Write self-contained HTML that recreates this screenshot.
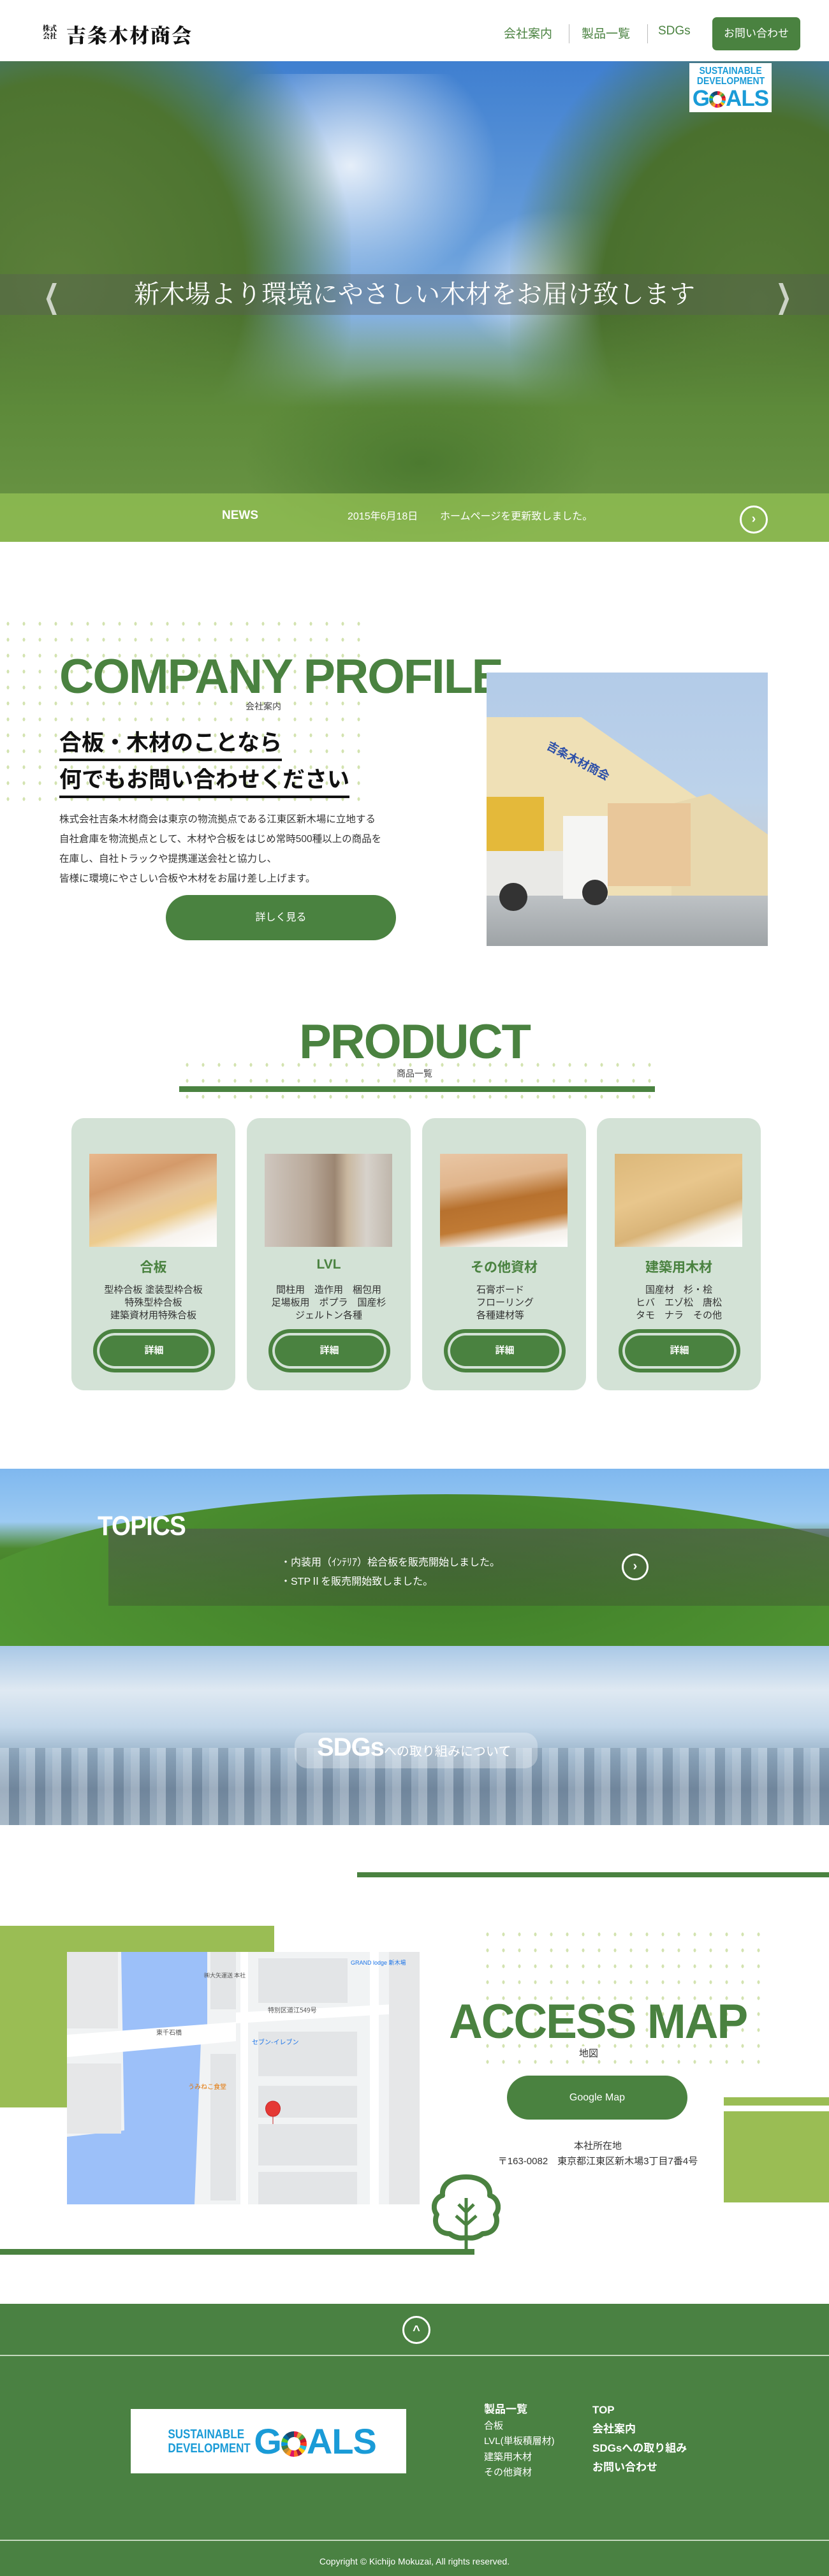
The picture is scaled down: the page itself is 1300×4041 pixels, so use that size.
<!DOCTYPE html>
<html lang="ja"><head><meta charset="utf-8">
<style>
*{margin:0;padding:0;box-sizing:border-box}
body{width:1300px;height:4041px;position:relative;background:#fff;font-family:"Liberation Sans","Noto Sans CJK JP",sans-serif;color:#222;overflow:hidden}
.abs{position:absolute}
.g{color:#4a8240}
.dots{background-image:radial-gradient(ellipse 2px 3px at center,#d3e3b0 95%,transparent 100%);background-size:25px 25px}
.sdg{background:#fff;color:#1a9bd7;font-weight:bold;font-family:"Liberation Sans",sans-serif;display:flex;flex-direction:column;justify-content:center;align-items:center;line-height:1}
.wheel{display:inline-block;border-radius:50%;background:conic-gradient(#e5243b 0 20deg,#dda63a 20deg 40deg,#4c9f38 40deg 60deg,#c5192d 60deg 80deg,#ff3a21 80deg 100deg,#26bde2 100deg 120deg,#fcc30b 120deg 140deg,#a21942 140deg 160deg,#fd6925 160deg 180deg,#dd1367 180deg 200deg,#fd9d24 200deg 220deg,#bf8b2e 220deg 240deg,#3f7e44 240deg 260deg,#0a97d9 260deg 280deg,#56c02b 280deg 300deg,#00689d 300deg 320deg,#19486a 320deg 360deg);position:relative;vertical-align:middle}
.wheel:after{content:"";position:absolute;inset:24%;background:#fff;border-radius:50%}
.card{position:absolute;top:1754px;width:257px;height:427px;background:#d3e2d6;border-radius:20px;text-align:center}
.card .img{position:absolute;left:28px;top:56px;width:200px;height:146px}
.card h3{position:absolute;top:218px;width:100%;font-size:21px;font-weight:bold;color:#4a8240}
.card p{position:absolute;top:260px;width:100%;font-size:15px;line-height:20px;color:#333}
.card .btn{position:absolute;left:34px;top:331px;width:191px;height:68px;border-radius:34px;background:#4a8240;border:6px solid #4a8240;box-shadow:inset 0 0 0 4px #d3e2d6;color:#fff;font-weight:bold;font-size:15px;line-height:56px}
.circ{position:absolute;border:3px solid #fff;border-radius:50%;}
</style></head><body>

<div class="abs" style="left:0;top:0;width:1300px;height:96px;background:#fff"></div>
<div class="abs" style="left:67px;top:38px;font-family:'Noto Serif CJK SC','Liberation Serif',serif;font-weight:900;font-size:11px;line-height:12px;width:28px;color:#111">株式<br>会社</div>
<div class="abs" style="left:104px;top:31px;font-family:'Noto Serif CJK SC','Liberation Serif',serif;font-weight:900;font-size:31px;letter-spacing:2px;color:#111">吉条木材商会</div>
<div class="abs g" style="left:790px;top:38px;font-size:19px">会社案内</div>
<div class="abs" style="left:892px;top:38px;width:1px;height:30px;background:#bbb"></div>
<div class="abs g" style="left:912px;top:38px;font-size:19px">製品一覧</div>
<div class="abs" style="left:1015px;top:38px;width:1px;height:30px;background:#bbb"></div>
<div class="abs g" style="left:1032px;top:38px;font-size:19px">SDGs</div>
<div class="abs" style="left:1117px;top:27px;width:138px;height:52px;background:#4a8240;border-radius:7px;color:#fff;font-size:17px;line-height:52px;text-align:center">お問い合わせ</div>

<div class="abs" style="left:0;top:96px;width:1300px;height:754px;overflow:hidden;background:linear-gradient(180deg,#3f7fd0 0%,#6aa0dc 40%,#9cc0e4 65%,#6e9a5a 100%)">
 <div class="abs" style="left:300px;top:20px;width:500px;height:360px;background:radial-gradient(ellipse at 50% 40%,rgba(255,255,255,.85),rgba(255,255,255,0) 65%)"></div>
 <div class="abs" style="left:700px;top:220px;width:360px;height:260px;background:radial-gradient(ellipse at center,rgba(255,255,255,.75),rgba(255,255,255,0) 65%)"></div>
 <div class="abs" style="left:-150px;top:-60px;width:700px;height:900px;background:radial-gradient(ellipse at 35% 45%,#5b7f3a 0%,#4d7430 45%,rgba(80,115,50,0) 72%)"></div>
 <div class="abs" style="left:800px;top:-80px;width:650px;height:920px;background:radial-gradient(ellipse at 60% 50%,#557a36 0%,#4a702e 45%,rgba(80,115,50,0) 72%)"></div>
 <div class="abs" style="left:0;top:400px;width:1300px;height:360px;background:linear-gradient(180deg,rgba(80,120,50,0),#5d8a3a 40%,#6c9646)"></div>
 <div class="abs" style="left:380px;top:480px;width:560px;height:300px;background:radial-gradient(ellipse at center,#4c7a30,rgba(76,122,48,0) 70%)"></div>
 <div class="abs" style="left:0;top:334px;width:1300px;height:64px;background:rgba(90,90,90,.35)"></div>
 <div class="abs" style="left:0;top:336px;width:1300px;text-align:center;color:#fff;font-family:'Liberation Serif','Noto Serif CJK SC',serif;font-size:40px;line-height:60px">新木場より環境にやさしい木材をお届け致します</div>
 <div class="abs" style="left:60px;top:340px;color:rgba(255,255,255,.7);font-size:50px;transform:scaleX(.6)">❮</div>
 <div class="abs" style="left:1208px;top:340px;color:rgba(255,255,255,.7);font-size:50px;transform:scaleX(.6)">❯</div>
 <div class="abs sdg" style="left:1081px;top:3px;width:129px;height:77px;font-size:15.5px">
  <div style="transform:scaleX(.9)">SUSTAINABLE</div><div style="transform:scaleX(.9);margin-top:1px">DEVELOPMENT</div>
  <div style="font-size:35px;letter-spacing:-1px;margin-top:1px">G<span class="wheel" style="width:26px;height:26px"></span>ALS</div></div>
 <div class="abs" style="left:0;top:678px;width:1300px;height:76px;background:rgba(150,195,85,.72)"></div>
 <div class="abs" style="left:348px;top:702px;color:#fff;font-weight:bold;font-size:19px">NEWS</div>
 <div class="abs" style="left:545px;top:700px;color:#fff;font-size:16px">2015年6月18日</div>
 <div class="abs" style="left:690px;top:700px;color:#fff;font-size:16px">ホームページを更新致しました。</div>
 <div class="circ" style="left:1160px;top:697px;width:44px;height:44px;color:#fff;text-align:center;line-height:36px;font-weight:bold;font-size:20px">›</div>
</div>

<div class="abs dots" style="left:0;top:966px;width:570px;height:300px"></div>
<div class="abs g" style="left:93px;top:1022px;font-size:76px;font-weight:bold;line-height:80px;letter-spacing:-2px;white-space:nowrap;transform:scaleX(.99);transform-origin:left">COMPANY PROFILE</div>
<div class="abs" style="left:385px;top:1098px;font-size:14px;color:#444">会社案内</div>
<div class="abs" style="left:93px;top:1142px;font-size:35px;font-weight:bold;line-height:48px;color:#111;border-bottom:4px solid #111">合板・木材のことなら</div>
<div class="abs" style="left:93px;top:1200px;font-size:35px;font-weight:bold;line-height:48px;color:#111;border-bottom:4px solid #111">何でもお問い合わせください</div>
<div class="abs" style="left:93px;top:1270px;font-size:15.5px;line-height:31px;color:#333;white-space:nowrap">株式会社吉条木材商会は東京の物流拠点である江東区新木場に立地する<br>自社倉庫を物流拠点として、木材や合板をはじめ常時500種以上の商品を<br>在庫し、自社トラックや提携運送会社と協力し、<br>皆様に環境にやさしい合板や木材をお届け差し上げます。</div>
<div class="abs" style="left:260px;top:1404px;width:361px;height:71px;border-radius:36px;background:#4a8240;color:#fff;text-align:center;line-height:71px;font-size:16px">詳しく見る</div>
<div class="abs" style="left:763px;top:1055px;width:441px;height:429px;overflow:hidden;background:linear-gradient(180deg,#b3cbe8 0%,#bcd2ea 45%,#c9cdd0 75%,#9ea3a6 100%)">
 <div class="abs" style="left:0;top:70px;width:330px;height:280px;background:#efe0b6;clip-path:polygon(0 0,45% 0,100% 45%,100% 100%,0 100%)"></div>
 <div class="abs" style="left:290px;top:190px;width:151px;height:160px;background:#e8d8ae;clip-path:polygon(0 10%,40% 0,100% 40%,100% 100%,0 100%)"></div>
 <div class="abs" style="left:90px;top:125px;color:#2c4fa8;font-weight:bold;font-size:18px;transform:rotate(28deg)">吉条木材商会</div>
 <div class="abs" style="left:0;top:195px;width:90px;height:90px;background:#e4b93a"></div>
 <div class="abs" style="left:190px;top:205px;width:130px;height:130px;background:#e9c79a"></div>
 <div class="abs" style="left:0;top:280px;width:150px;height:70px;background:#e9e9e6"></div>
 <div class="abs" style="left:120px;top:225px;width:70px;height:130px;background:#f5f5f3"></div>
 <div class="abs" style="left:20px;top:330px;width:44px;height:44px;border-radius:50%;background:#333"></div>
 <div class="abs" style="left:150px;top:325px;width:40px;height:40px;border-radius:50%;background:#333"></div>
</div>

<div class="abs g" style="left:0;top:1590px;width:1300px;text-align:center;font-size:76px;font-weight:bold;letter-spacing:-2px;line-height:90px">PRODUCT</div>
<div class="abs dots" style="left:281px;top:1658px;width:746px;height:75px"></div>
<div class="abs" style="left:0;top:1674px;width:1300px;text-align:center;font-size:14px;color:#444"><span style="background:#fff;padding:0 4px">商品一覧</span></div>
<div class="abs" style="left:281px;top:1704px;width:746px;height:9px;background:#4a8240"></div>

<div class="card" style="left:112px"><div class="img" style="background:linear-gradient(160deg,#e9b98e 0%,#d49a6a 30%,#e6c59b 50%,#eccb8d 65%,#f7f3ee 80%,#fff 100%)"></div><h3>合板</h3><p>型枠合板 塗装型枠合板<br>特殊型枠合板<br>建築資材用特殊合板</p><div class="btn">詳細</div></div>
<div class="card" style="left:387px"><div class="img" style="background:linear-gradient(90deg,#cfc7bf 0%,#b9a99a 35%,#9c8672 55%,#c9b8a0 65%,#d7d2cb 80%,#bfb6ab 100%)"></div><h3>LVL</h3><p>間柱用　造作用　梱包用<br>足場板用　ポプラ　国産杉<br>ジェルトン各種</p><div class="btn">詳細</div></div>
<div class="card" style="left:662px"><div class="img" style="background:linear-gradient(170deg,#e9c6a4 0%,#e0b58c 30%,#b7712e 50%,#c07a34 70%,#f4efe9 85%,#fff 100%)"></div><h3>その他資材</h3><p style="text-align:left;padding-left:85px">石膏ボード<br>フローリング<br>各種建材等</p><div class="btn">詳細</div></div>
<div class="card" style="left:936px"><div class="img" style="background:linear-gradient(160deg,#dcb87a 0%,#e8c68c 40%,#d9b478 65%,#f6f2ea 80%,#fff 100%)"></div><h3>建築用木材</h3><p>国産材　杉・桧<br>ヒバ　エゾ松　唐松<br>タモ　ナラ　その他</p><div class="btn">詳細</div></div>

<div class="abs" style="left:0;top:2304px;width:1300px;height:278px;overflow:hidden;background:linear-gradient(180deg,#7fb8ef 0%,#9ccaf2 30%,#4d8a30 45%,#3f7a26 70%,#58a038 100%)">
 <div class="abs" style="left:-100px;top:40px;width:1600px;height:400px;border-radius:50% 50% 0 0;background:radial-gradient(ellipse at 50% 30%,#3f7d28,#4f9332 60%,#5aa63a)"></div>
 <div class="abs" style="left:170px;top:94px;width:1130px;height:121px;background:linear-gradient(180deg,rgba(80,80,80,.55) 0%,rgba(60,70,50,.35) 100%)"></div>
 <div class="abs" style="left:153px;top:66px;color:#fff;font-size:43px;font-weight:bold;letter-spacing:-1px;transform:scaleX(.9);transform-origin:left">TOPICS</div>
 <div class="abs" style="left:440px;top:133px;color:#fff;font-size:16px;line-height:30px">・内装用（ｲﾝﾃﾘｱ）桧合板を販売開始しました。<br>・STPⅡを販売開始致しました。</div>
 <div class="circ" style="left:975px;top:133px;width:42px;height:42px;color:#fff;text-align:center;line-height:34px;font-weight:bold;font-size:20px">›</div>
</div>
<div class="abs" style="left:0;top:2582px;width:1300px;height:281px;overflow:hidden;background:linear-gradient(180deg,#a9c8e6 0%,#dfe9f2 25%,#c4d8ea 45%,#98b2c9 62%,#7d93aa 80%,#8ea4b7 100%)">
 <div class="abs" style="left:0;top:160px;width:1300px;height:121px;background:repeating-linear-gradient(90deg,rgba(255,255,255,.25) 0 14px,rgba(60,80,100,.2) 14px 30px,rgba(255,255,255,.12) 30px 41px)"></div>
 <div class="abs" style="left:462px;top:136px;width:381px;height:56px;border-radius:20px;background:rgba(255,255,255,.3)"></div>
 <div class="abs" style="left:497px;top:137px;color:#fff;white-space:nowrap"><span style="font-size:40px;font-weight:bold;letter-spacing:-1px">SDGs</span><span style="font-size:20px">への取り組みについて</span></div>
</div>

<div class="abs" style="left:560px;top:2937px;width:740px;height:8px;background:#4a8240"></div>
<div class="abs" style="left:0;top:3021px;width:430px;height:285px;background:#9abd54"></div>
<div class="abs" style="left:105px;top:3062px;width:553px;height:396px;overflow:hidden;background:#f1f3f4">
 <svg width="553" height="396" style="position:absolute;left:0;top:0">
  <polygon points="85,0 220,0 220,120 210,140 200,396 0,396 0,290 90,280" fill="#9cc0f9"/>
  <polygon points="0,130 265,110 265,140 0,165" fill="#fff"/>
  <polygon points="265,95 553,80 553,95 265,112" fill="#fff"/>
  <rect x="272" y="0" width="12" height="396" fill="#fff"/>
  <rect x="475" y="0" width="14" height="396" fill="#fff"/>
  <rect x="300" y="10" width="140" height="70" fill="#e3e5e7"/>
  <rect x="300" y="125" width="155" height="70" fill="#e3e5e7"/>
  <rect x="300" y="210" width="155" height="50" fill="#e3e5e7"/>
  <rect x="300" y="270" width="155" height="65" fill="#e3e5e7"/>
  <rect x="300" y="345" width="155" height="51" fill="#e3e5e7"/>
  <rect x="225" y="0" width="40" height="90" fill="#e3e5e7"/>
  <rect x="225" y="160" width="40" height="230" fill="#e3e5e7"/>
  <rect x="0" y="0" width="80" height="120" fill="#e6e7e8"/>
  <rect x="0" y="175" width="85" height="110" fill="#e6e7e8"/>
  <rect x="505" y="0" width="48" height="396" fill="#e6e7e8"/>
  <path d="M323 258 c-10 0 -14 -12 -10 -18 c4 -8 16 -8 20 0 c4 6 0 18 -10 18z M323 258 l0 12" fill="#e53935" stroke="#c62828"/>
  <text x="140" y="130" font-size="10" fill="#555" font-family="Noto Sans CJK JP">東千石橋</text>
  <text x="315" y="95" font-size="10" fill="#555" font-family="Noto Sans CJK JP">特別区道江549号</text>
  <text x="290" y="145" font-size="10" fill="#1a73e8" font-family="Noto Sans CJK JP">セブン-イレブン</text>
  <text x="215" y="40" font-size="9" fill="#555" font-family="Noto Sans CJK JP">㈱大矢運送 本社</text>
  <text x="190" y="215" font-size="10" fill="#e37400" font-family="Noto Sans CJK JP">うみねこ食堂</text>
  <text x="445" y="20" font-size="9" fill="#1a73e8" font-family="Liberation Sans">GRAND lodge 新木場</text>
 </svg>
</div>
<div class="abs dots" style="left:752px;top:3022px;width:460px;height:230px"></div>
<div class="abs g" style="left:704px;top:3130px;font-size:76px;font-weight:bold;line-height:84px;letter-spacing:-2px;white-space:nowrap;transform:scaleX(.96);transform-origin:left">ACCESS MAP</div>
<div class="abs" style="left:908px;top:3210px;font-size:15px;color:#333;background:#fff">地図</div>
<div class="abs" style="left:795px;top:3256px;width:283px;height:69px;border-radius:35px;background:#4a8240;color:#fff;text-align:center;line-height:69px;font-size:16px">Google Map</div>
<div class="abs" style="left:1135px;top:3290px;width:165px;height:13px;background:#9abd54"></div>
<div class="abs" style="left:1135px;top:3312px;width:165px;height:143px;background:#9abd54"></div>
<div class="abs" style="left:700px;top:3355px;width:475px;text-align:center;font-size:15px;line-height:24px;color:#333">本社所在地<br>〒163-0082　東京都江東区新木場3丁目7番4号</div>
<svg class="abs" style="left:677px;top:3410px" width="108" height="122" viewBox="0 0 108 122">
 <path d="M28,94 C10,94 2,78 8,64 C0,54 4,38 17,34 C15,16 32,5 54,5 C76,5 93,16 91,34 C104,38 108,54 100,64 C106,78 98,94 80,94 C72,100 63,102 54,100 C45,102 36,100 28,94 Z" fill="none" stroke="#4a8240" stroke-width="8" stroke-linejoin="round"/>
 <path d="M54,38 L54,122 M54,60 L42,48 M54,60 L66,48 M54,80 L38,66 M54,80 L70,66" stroke="#4a8240" stroke-width="5" fill="none"/>
</svg>
<div class="abs" style="left:0;top:3528px;width:744px;height:9px;background:#4a8240"></div>

<div class="abs" style="left:0;top:3614px;width:1300px;height:427px;background:#4a8142"></div>
<div class="circ" style="left:631px;top:3633px;width:44px;height:44px;color:#fff;text-align:center;line-height:40px;font-size:20px;font-weight:bold">^</div>
<div class="abs" style="left:0;top:3694px;width:1300px;height:2px;background:#c4d8bd"></div>
<div class="abs sdg" style="left:205px;top:3779px;width:432px;height:101px;flex-direction:row">
 <div style="font-size:20px;line-height:22px;transform:scaleX(.85)">SUSTAINABLE<br>DEVELOPMENT</div>
 <div style="font-size:56px;letter-spacing:-1px;margin-left:-6px">G<span class="wheel" style="width:40px;height:40px"></span>ALS</div>
</div>
<div class="abs" style="left:759px;top:3768px;color:#fff;font-size:15px;line-height:24.5px"><b style="font-size:17px">製品一覧</b><br>合板<br>LVL(単板積層材)<br>建築用木材<br>その他資材</div>
<div class="abs" style="left:929px;top:3766px;color:#fff;font-size:17px;font-weight:bold;line-height:30px">TOP<br>会社案内<br>SDGsへの取り組み<br>お問い合わせ</div>
<div class="abs" style="left:0;top:3984px;width:1300px;height:2px;background:#c4d8bd"></div>
<div class="abs" style="left:0;top:4010px;width:1300px;text-align:center;color:#fff;font-size:14px">Copyright © Kichijo Mokuzai, All rights reserved.</div>
</body></html>
